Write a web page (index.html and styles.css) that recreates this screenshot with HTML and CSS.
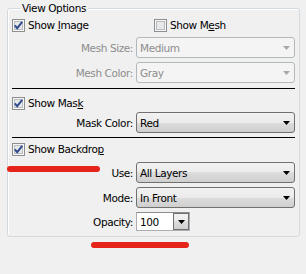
FILE: index.html
```html
<!DOCTYPE html>
<html>
<head>
<meta charset="utf-8">
<link rel="stylesheet" href="styles.css">
</head>
<body>
<div class="group">
  <span class="legend">View Options</span>

  <div class="row-check">
    <label class="check first">
      <svg class="cb" width="13" height="13" viewBox="0 0 13 13"><rect x="0.5" y="0.5" width="12" height="12" fill="#f6f6f6" stroke="#8e8f8f"/><rect x="2.5" y="2.5" width="8" height="8" fill="#e6e8ea" stroke="#b9bdc2"/><path d="M2.8 6.4 L5.2 9.2 L10.2 2.8" fill="none" stroke="#2f4a8c" stroke-width="1.9"/></svg>
      <span>Show <u>I</u>mage</span>
    </label>
    <label class="check">
      <svg class="cb" width="13" height="13" viewBox="0 0 13 13"><rect x="0.5" y="0.5" width="12" height="12" fill="#f6f6f6" stroke="#8e8f8f"/><rect x="2.5" y="2.5" width="8" height="8" fill="#e6e8ea" stroke="#b9bdc2"/></svg>
      <span>Show M<u>e</u>sh</span>
    </label>
  </div>

  <div class="field disabled gap3">
    <span class="lbl">Mesh Size:</span>
    <div class="combo"><span>Medium</span><svg class="arrow" width="7" height="4" viewBox="0 0 7 4"><path d="M0 0h7l-3.5 4z"/></svg></div>
  </div>
  <div class="field disabled gap4">
    <span class="lbl">Mesh Color:</span>
    <div class="combo"><span>Gray</span><svg class="arrow" width="7" height="4" viewBox="0 0 7 4"><path d="M0 0h7l-3.5 4z"/></svg></div>
  </div>

  <div class="divider gap5"></div>

  <div class="row-check gap6">
    <label class="check">
      <svg class="cb" width="13" height="13" viewBox="0 0 13 13"><rect x="0.5" y="0.5" width="12" height="12" fill="#f6f6f6" stroke="#8e8f8f"/><rect x="2.5" y="2.5" width="8" height="8" fill="#e6e8ea" stroke="#b9bdc2"/><path d="M2.8 6.4 L5.2 9.2 L10.2 2.8" fill="none" stroke="#2f4a8c" stroke-width="1.9"/></svg>
      <span>Show Mas<u>k</u></span>
    </label>
  </div>
  <div class="field">
    <span class="lbl">Mask Color:</span>
    <div class="combo"><span>Red</span><svg class="arrow" width="7" height="4" viewBox="0 0 7 4"><path d="M0 0h7l-3.5 4z"/></svg></div>
  </div>

  <div class="divider gap4"></div>

  <div class="row-check gap3">
    <label class="check">
      <svg class="cb" width="13" height="13" viewBox="0 0 13 13"><rect x="0.5" y="0.5" width="12" height="12" fill="#f6f6f6" stroke="#8e8f8f"/><rect x="2.5" y="2.5" width="8" height="8" fill="#e6e8ea" stroke="#b9bdc2"/><path d="M2.8 6.4 L5.2 9.2 L10.2 2.8" fill="none" stroke="#2f4a8c" stroke-width="1.9"/></svg>
      <span>Show Backdro<u>p</u></span>
    </label>
  </div>
  <div class="field gap4">
    <span class="lbl">Use:</span>
    <div class="combo"><span>All Layers</span><svg class="arrow" width="7" height="4" viewBox="0 0 7 4"><path d="M0 0h7l-3.5 4z"/></svg></div>
  </div>
  <div class="field gap4">
    <span class="lbl">Mode:</span>
    <div class="combo"><span>In Front</span><svg class="arrow" width="7" height="4" viewBox="0 0 7 4"><path d="M0 0h7l-3.5 4z"/></svg></div>
  </div>
  <div class="field short gap4">
    <span class="lbl">Opacity:</span>
    <div class="spin"><span class="val">100</span><span class="btn"><svg class="arrow" width="7" height="4" viewBox="0 0 7 4"><path d="M0 0h7l-3.5 4z"/></svg></span></div>
  </div>
</div>
<div class="mark mark1"></div>
<div class="mark mark2"></div>
</body>
</html>
```

FILE: styles.css
```css
html, body {
  margin: 0;
  padding: 0;
  background: #f0f0f0;
}
body {
  width: 306px;
  height: 274px;
  position: relative;
  overflow: hidden;
  font-family: "DejaVu Sans", "Liberation Sans", sans-serif;
  font-size: 10.5px;
  letter-spacing: -0.4px;
  color: #000;
}
.group {
  position: relative;
  margin: 8px 6px 0 7px;
  border: 1px solid #d3dadf;
  border-radius: 3px;
  box-shadow: inset 1px 1px 0 #fff;
  padding: 8px 4px 5px 4px;
  display: flex;
  flex-direction: column;
}
.legend {
  position: absolute;
  left: 12px;
  top: -8px;
  padding: 0 2px;
  line-height: 14px;
  background: #f0f0f0;
}
.row-check {
  height: 17px;
  display: flex;
  align-items: center;
}
.check {
  display: flex;
  align-items: center;
  line-height: 13px;
}
.check.first {
  width: 142px;
}
.cb {
  display: block;
  margin-right: 3px;
  flex: none;
}
.field {
  display: grid;
  grid-template-columns: 124px 1fr;
  align-items: center;
  height: 21px;
}
.field.short {
  grid-template-columns: 124px 54px;
  height: 19px;
}
.lbl {
  text-align: right;
  padding-right: 3px;
}
.combo {
  height: 21px;
  box-sizing: border-box;
  border: 1px solid #707070;
  border-radius: 3px;
  background: linear-gradient(#f2f2f2 0%, #ebebeb 50%, #dddddd 50%, #cfcfcf 100%);
  display: flex;
  align-items: center;
  justify-content: space-between;
  padding: 0 4px 0 3px;
}
.arrow {
  display: block;
  fill: #000;
}
.disabled .lbl,
.disabled .combo {
  color: #8d8d8d;
}
.disabled .combo {
  border-color: #b3b8bb;
  background: #f4f4f4;
}
.disabled .arrow {
  fill: #a8a8a8;
}
.spin {
  height: 19px;
  box-sizing: border-box;
  border: 1px solid #abadb3;
  border-top-color: #8a8c92;
  background: #fff;
  display: flex;
  align-items: center;
  justify-content: space-between;
  padding: 0 0 0 3px;
}
.btn {
  width: 16px;
  height: 17px;
  box-sizing: border-box;
  border: 1px solid #707070;
  background: linear-gradient(#f2f2f2 0%, #ebebeb 50%, #dddddd 50%, #cfcfcf 100%);
  display: flex;
  align-items: center;
  justify-content: center;
}
.divider {
  height: 1px;
  background: #000;
}
.gap3 { margin-top: 3px; }
.gap4 { margin-top: 4px; }
.gap5 { margin-top: 5px; }
.gap6 { margin-top: 6px; }
.mark {
  position: absolute;
  height: 6px;
  border-radius: 4px;
  background: #e4231b;
  filter: blur(0.7px);
}
.mark1 {
  left: 7px;
  top: 166px;
  width: 93px;
}
.mark2 {
  left: 91px;
  top: 242px;
  width: 98px;
}
```
